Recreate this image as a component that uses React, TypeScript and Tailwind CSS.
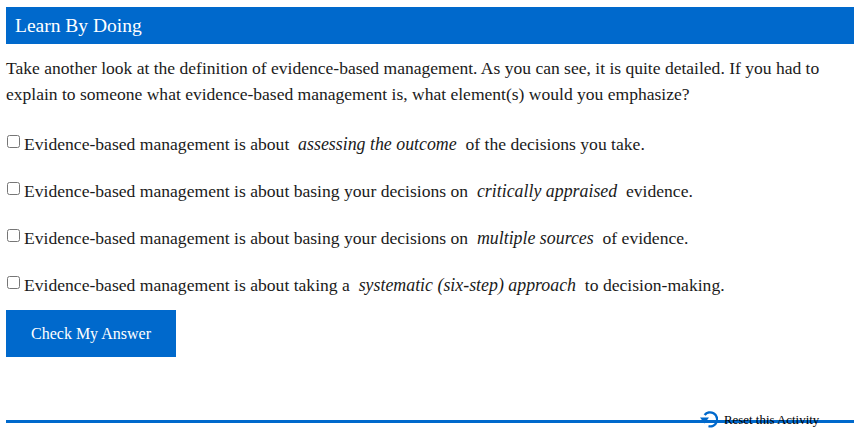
const serif = "font-['Liberation_Serif',serif]";

const options = [
  { before: "Evidence-based management is about", em: "assessing the outcome", after: "of the decisions you take." },
  { before: "Evidence-based management is about basing your decisions on", em: "critically appraised", after: "evidence." },
  { before: "Evidence-based management is about basing your decisions on", em: "multiple sources", after: "of evidence." },
  { before: "Evidence-based management is about taking a", em: "systematic (six-step) approach", after: "to decision-making." },
];

const App = () => {
  return (
    <div className={`${serif} w-[862px] h-[436px] overflow-hidden bg-white pl-[6px] pr-[8px] pt-[7px] text-[#1a1a1a] relative`}>
      <div className="h-[37px] bg-[#0069cc] pl-[9px] flex items-center text-white text-[19.5px]">Learn By Doing</div>

      <p className="mt-[11px] text-[17.55px] leading-[26px]">
        Take another look at the definition of evidence-based management. As you can see, it is quite detailed. If you had to explain to someone what evidence-based management is, what element(s) would you emphasize?
      </p>

      <div className="mt-[23px] flex flex-col gap-[18px]">
        {options.map((o) => (
          <label key={o.em} className="flex items-center h-[29px] text-[17.6px]">
            <input type="checkbox" className="w-[13px] h-[13px] mr-[4px] mb-[6px] ml-[1px]" />
            <span className="whitespace-pre">
              {o.before}  <em className="text-[17.85px]">{o.em}</em>  {o.after}
            </span>
          </label>
        ))}
      </div>

      <button className="mt-[10px] w-[170px] h-[47px] bg-[#0069cc] text-white text-[16px] block">Check My Answer</button>

      {/* rule with the reset link sitting over it */}
      <div className="mt-[63px] h-[3px] bg-[#0069cc]" />
      <div className="absolute left-[700px] top-[408px] flex items-center text-[12.9px] text-black">
        <svg viewBox="0 0 18 17" className="w-[18px] h-[17px] mr-[6px]">
          <path d="M4.6 4 A7 7 0 1 1 8.5 15.2" fill="none" stroke="#0069cc" strokeWidth="2.4" />
          <polygon points="0,6.5 9,6.5 4.5,12.5" fill="#0069cc" />
        </svg>
        <span className="mt-[3px]">Reset this Activity</span>
      </div>
    </div>
  );
};

export default App;
